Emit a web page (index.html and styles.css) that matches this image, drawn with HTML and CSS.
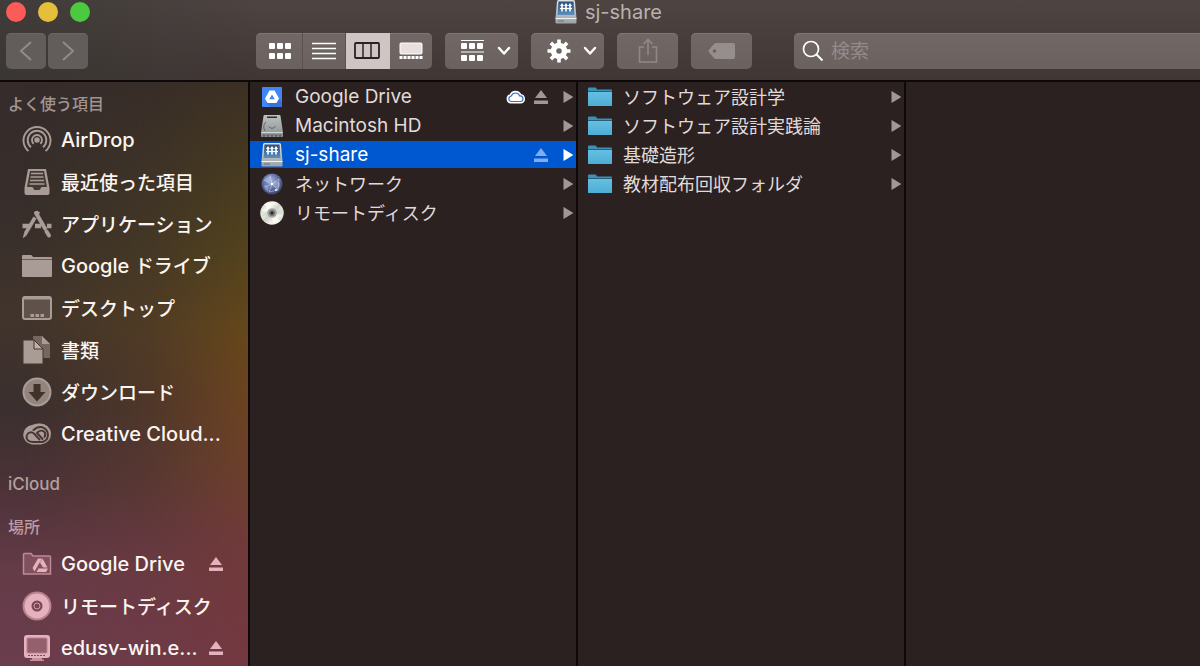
FILE: index.html
```html
<!DOCTYPE html>
<html lang="ja">
<head>
<meta charset="utf-8">
<meta name="viewport" content="width=device-width, initial-scale=1">
<title>sj-share</title>
<link rel="stylesheet" href="styles.css">
</head>
<body>
<svg class="defs" aria-hidden="true">
  <defs>
    <linearGradient id="silver" x1="0" y1="0" x2="0" y2="1"><stop offset="0" stop-color="#dfe3e4"/><stop offset="1" stop-color="#9aa3a7"/></linearGradient>
    <linearGradient id="hd" x1="0" y1="0" x2="0" y2="1"><stop offset="0" stop-color="#bcc0c0"/><stop offset="1" stop-color="#8b9191"/></linearGradient>
    <linearGradient id="screen" x1="0" y1="0" x2="0" y2="1"><stop offset="0" stop-color="#2b4f78"/><stop offset="1" stop-color="#5b8fc0"/></linearGradient>
    <linearGradient id="blue" x1="0" y1="0" x2="0" y2="1"><stop offset="0" stop-color="#66bfe2"/><stop offset="1" stop-color="#4dadd5"/></linearGradient>
    <radialGradient id="globe" cx=".45" cy=".35" r=".65"><stop offset="0" stop-color="#a7b5dc"/><stop offset=".6" stop-color="#5b6aa0"/><stop offset="1" stop-color="#3a4470"/></radialGradient>
    <linearGradient id="disc" x1="0" y1="0" x2="1" y2="1"><stop offset="0" stop-color="#b5b2a8"/><stop offset=".3" stop-color="#fbfaf2"/><stop offset=".5" stop-color="#d3d2ca"/><stop offset=".7" stop-color="#f4f3ee"/><stop offset="1" stop-color="#b5b8b2"/></linearGradient>
    <symbol id="i-server" viewBox="0 0 24 24">
      <path d="M3 1.500Q3 0 4.500 0h15Q21 0 21 1.500L22.500 18v4.500q0 1-1 1h-19q-1 0-1-1V18z" fill="url(#silver)"/>
      <path d="M4.500 1.500h15l1 13.500h-17z" fill="url(#screen)"/>
      <path d="M1.500 18.500h21" stroke="#eef1f2"/>
      <path d="M8 5v6.500M12 5v6.500M16 5v6.500" stroke="#fff" stroke-width="1.600"/>
      <path d="M6 6l2-3 2 3zM10 6l2-3 2 3zM14 6l2-3 2 3z" fill="#fff"/>
      <path d="M6 8.500h12" stroke="#fff" stroke-width="1.200"/>
      <path d="M4 21h6" stroke="#68737a"/>
    </symbol>
    <symbol id="i-hd" viewBox="0 0 24 24">
      <path d="M3.500 2q0-1 1-1h15q1 0 1 1L23 18.500V22q0 1-1 1H2q-1 0-1-1v-3.500z" fill="url(#hd)"/>
      <path d="M7 2.500h10v1.500H7z" fill="#292d2e"/>
      <path d="M1.500 18.500h21" stroke="#d2d6d6"/>
      <path d="M8.500 12.500q3.500 3.500 7 0M5 17Q2 12 6 8" fill="none" stroke="#5f6666"/>
      <path d="M2 21h20" stroke="#6d7373"/>
      <path d="M3 22h18" stroke="#3f4444" stroke-dasharray="2 2"/>
    </symbol>
    <symbol id="i-gdrive" viewBox="0 0 24 24">
      <rect x="2" y="2" width="20" height="20" rx="1" fill="#4285f4"/>
      <path d="M6 17.500L10.500 22h10Q22 22 22 20.500V17l-4-4z" fill="#3671d6"/>
      <path d="M9.500 5.500h5L19 13.500l-2.500 4.500h-9L5 13.500z" fill="#fff"/>
      <path d="M12 9.500l2.800 4.700H9.200z" fill="#4285f4"/>
    </symbol>
    <symbol id="i-globe" viewBox="0 0 24 24">
      <circle cx="12" cy="12" r="10.500" fill="url(#globe)"/>
      <path d="M4 8q3-4 7-4 1 3-2 6zM13 10q6-2 7 2 0 4-3 5-3-1-4-7zM4 13q4 0 5 3l-1 4q-4-2-4-7z" fill="#c5d0ea" opacity=".4"/>
      <path d="M4 8l8 4 7-5M12 12l-3 8M12 12l6 6M5 15l7-3-2-9M19 7l-1 11-9 2" fill="none" stroke="#d8e2f8" stroke-width=".6" opacity=".8"/>
      <circle cx="12" cy="12" r="1.200" fill="#fff"/><circle cx="16" cy="18" r="1" fill="#fff"/>
    </symbol>
    <symbol id="i-disc" viewBox="0 0 24 24">
      <circle cx="12" cy="12" r="11.700" fill="url(#disc)"/>
      <path d="M12 12L4 3.500Q7 1 10 1zM12 12l8 8q-3 3-7 3z" fill="#fffef0" opacity=".8"/>
      <path d="M12 12L23 8q1 3 .5 6zM12 12L1 10q0 4 1 6z" fill="#b7d0bd" opacity=".45"/>
      <circle cx="12" cy="12" r="4.800" fill="#a6a7a3"/><circle cx="12" cy="12" r="3" fill="#6e7070"/><circle cx="12" cy="12" r="1.300" fill="#1e1e1e"/>
    </symbol>
    <symbol id="i-folder" viewBox="0 0 24 20">
      <path d="M0 19V1.500Q0 .5 1 .5h6q1 0 1.500 1l.5 1h14q1 0 1 1V19z" fill="#3b92b8"/>
      <path d="M0 5h24v13q0 1-1 1H1q-1 0-1-1z" fill="url(#blue)"/>
      <path d="M0 4.500h24" stroke="#276078"/>
    </symbol>
    <symbol id="i-eject" viewBox="0 0 14 14"><path d="M7 0l6 8H1zM0 10.500h14V14H0z" fill="currentColor"/></symbol>
    <symbol id="i-arrow" viewBox="0 0 10 12"><path d="M.5.5Q.5 0 1 .3l8.600 5.200q.6.500 0 1L1 11.700q-.5.300-.5-.2z" fill="currentColor"/></symbol>
    <symbol id="i-cloud" viewBox="0 0 20 14"><path d="M5 12.500a3.700 3.700 0 0 1-.5-7.300A5.400 5.400 0 0 1 14.500 5a3.800 3.800 0 0 1 .5 7.500z" fill="#fff" stroke="#fff" stroke-width="2"/><path d="M5 11.500a2.800 2.800 0 0 1 .3-5.500A4.500 4.500 0 0 1 13.800 6a2.800 2.800 0 0 1 1 5.500z" fill="#fff" stroke="#3f74cc" stroke-width="1.200"/></symbol>
    <symbol id="i-chev" viewBox="0 0 14 10"><path d="M2 2l5 5.500L12 2" fill="none" stroke="#fff" stroke-width="2.400" stroke-linecap="round" stroke-linejoin="round"/></symbol>
  </defs>
</svg>

<div class="window">
  <header class="header">
    <div class="titlebar">
      <div class="lights">
        <button class="light close" aria-label="閉じる"></button>
        <button class="light minimize" aria-label="しまう"></button>
        <button class="light expand" aria-label="拡大"></button>
      </div>
      <h1 class="title"><svg class="file-icon"><use href="#i-server"/></svg>sj-share</h1>
    </div>
    <div class="toolbar">
      <div class="nav">
        <button class="btn back" aria-label="戻る"><svg width="14" height="20" viewBox="0 0 14 20"><path d="M12 1L2 10l10 9" fill="none" stroke="#918b89" stroke-width="2"/></svg></button>
        <button class="btn back" aria-label="進む"><svg width="14" height="20" viewBox="0 0 14 20"><path d="M2 1l10 9-10 9" fill="none" stroke="#918b89" stroke-width="2"/></svg></button>
      </div>
      <div class="segments">
        <button class="segment" aria-label="アイコン"><svg width="24" height="18" fill="#fff"><rect x="1" y="1" width="6" height="6" rx="1"/><rect x="9" y="1" width="6" height="6" rx="1"/><rect x="17" y="1" width="6" height="6" rx="1"/><rect x="1" y="11" width="6" height="6" rx="1"/><rect x="9" y="11" width="6" height="6" rx="1"/><rect x="17" y="11" width="6" height="6" rx="1"/></svg></button>
        <button class="segment" aria-label="リスト"><svg width="24" height="18"><path d="M0 1.500h24M0 6.500h24M0 11.500h24M0 16.500h24" stroke="#fff" stroke-width="1.600"/></svg></button>
        <button class="segment selected" aria-label="カラム"><svg width="26" height="18"><rect x="1" y="1" width="24" height="15" rx="1" fill="none" stroke="#292222" stroke-width="1.800"/><path d="M9 1v15M17 1v15" stroke="#292222" stroke-width="1.500"/></svg></button>
        <button class="segment" aria-label="ギャラリー"><svg width="24" height="18"><rect x="1" y="1" width="22" height="11" rx="1" fill="#e9dfdf" stroke="#fff"/><path d="M.5 15.500h23" stroke="#fff" stroke-width="3" stroke-dasharray="3 1"/></svg></button>
      </div>
      <button class="btn menu" aria-label="グループ"><svg width="24" height="24" fill="#fff"><path d="M0 1h23v1H0zM0 12.500h23v1H0z"/><rect x="0" y="4" width="6" height="6" rx="1"/><rect x="8" y="4" width="6" height="6" rx="1"/><rect x="16" y="4" width="6" height="6" rx="1"/><rect x="0" y="16" width="6" height="6" rx="1"/><rect x="8" y="16" width="6" height="6" rx="1"/><rect x="16" y="16" width="6" height="6" rx="1"/></svg><svg class="chev"><use href="#i-chev"/></svg></button>
      <button class="btn menu" aria-label="操作"><svg width="24" height="24" viewBox="-12 -12 24 24"><circle r="5.500" fill="none" stroke="#fff" stroke-width="5.500"/><g stroke="#fff" stroke-width="3.600"><path d="M0-11.500V-6M0 6v5.500M-11.500 0H-6M6 0h5.500"/><path d="M0-11.500V-6M0 6v5.500M-11.500 0H-6M6 0h5.500" transform="rotate(45)"/></g></svg><svg class="chev"><use href="#i-chev"/></svg></button>
      <button class="btn action" aria-label="共有"><svg width="20" height="26" fill="none" stroke="#918886" stroke-width="1.600"><path d="M6 9H1.500v15h17V9H14M10 17V2M5.500 6L10 1.500 14.500 6"/></svg></button>
      <button class="btn action" aria-label="タグ"><svg width="28" height="18"><path d="M8 1h17q2 0 2 2v12q0 2-2 2H8q-1 0-2-1L.8 10q-.6-1 0-2L6 2q1-1 2-1z" fill="#968e8c"/><circle cx="6.500" cy="9" r="1.800" fill="#6a6260"/></svg></button>
      <label class="search"><svg width="22" height="22"><circle cx="9" cy="9" r="7.500" fill="none" stroke="#fff" stroke-width="1.700"/><path d="M14.500 14.500l6 6" stroke="#fff" stroke-width="1.900"/></svg><input type="search" placeholder="検索" aria-label="検索"></label>
    </div>
  </header>

  <main class="content">
    <nav class="sidebar">
      <h2 class="heading first">よく使う項目</h2>
      <ul class="places">
        <li><a class="place latin" href="#"><svg class="glyph" viewBox="0 0 30 30" fill="none" stroke="currentColor" stroke-width="1.900"><circle cx="15" cy="15" r="1.800" fill="currentColor"/><path d="M11.700 18.800a5 5 0 1 1 6.600 0M9 22.200a9.300 9.300 0 1 1 12 0M6.500 26a13.500 13.500 0 1 1 17 0"/></svg><span class="name">AirDrop</span></a></li>
        <li><a class="place" href="#"><svg class="glyph" viewBox="0 0 30 30"><path d="M6 2h18l3.500 19v5q0 2-2 2h-21q-2 0-2-2v-5z" fill="currentColor"/><path d="M8 4h14l3 16h-5q-1 0-1.500 1.500T17 23h-4q-1 0-1.500-1.500T10 20H5z" fill="#443a36"/><path d="M9 6.500h12M8.500 10h13M8 13.500h14M7.500 17h15" stroke="currentColor" stroke-width="1.600"/></svg><span class="name">最近使った項目</span></a></li>
        <li><a class="place" href="#"><svg class="glyph" viewBox="0 0 30 30" fill="none" stroke="currentColor"><path d="M.5 17h8M13 17h6M25 17h4.500" stroke-width="4.500"/><path d="M14 4l9 15.500" stroke-width="4" stroke-linecap="round"/><path d="M24.500 22.500l2.500 4" stroke-width="4" stroke-linecap="round"/><path d="M16.500 2.500l-2 3.500M13 8.500L3.500 24.500" stroke-width="3.600"/><path d="M2.500 24l2.500 1.500L1.500 28.500z" fill="currentColor"/></svg><span class="name">アプリケーション</span></a></li>
        <li><a class="place latin" href="#"><svg class="glyph" viewBox="0 0 30 30"><path d="M0 7V5q0-1 1-1h8q1 0 2 2h18q1 0 1 1v1H0zM0 9h30v16q0 1-1 1H1q-1 0-1-1z" fill="currentColor"/><path d="M0 8.500h30" stroke="#6d5c52"/></svg><span class="name">Google <span class="jp">ドライブ</span></span></a></li>
        <li><a class="place" href="#"><svg class="glyph" viewBox="0 0 30 30"><rect x="1" y="4" width="28" height="22" rx="2" fill="#60524a" stroke="currentColor" stroke-width="2"/><path d="M2 5.500h26" stroke="currentColor" stroke-width="2"/><path d="M8.500 22.500h14" stroke="currentColor" stroke-width="3" stroke-dasharray="3.500 1.500"/></svg><span class="name">デスクトップ</span></a></li>
        <li><a class="place" href="#"><svg class="glyph" viewBox="0 0 30 30"><path d="M11 1h9l8 8v14H11z" fill="#75675f"/><path d="M20 1l8 8h-8z" fill="currentColor"/><path d="M1 5h11l9 9v15H1z" fill="currentColor" stroke="#453628"/><path d="M12 5l9 9h-9z" fill="#c0afa6" stroke="#453628"/></svg><span class="name">書類</span></a></li>
        <li><a class="place" href="#"><svg class="glyph" viewBox="0 0 30 30"><circle cx="15" cy="15" r="13.500" fill="#93857e" stroke="currentColor" stroke-width="2"/><path d="M11.500 7h7v8h5L15 24.500 6.500 15h5z" fill="#433229"/></svg><span class="name">ダウンロード</span></a></li>
        <li><a class="place latin" href="#"><svg class="glyph" viewBox="0 0 30 30"><path d="M10 6Q13.500 4 18 4.500a10.500 10.500 0 0 1 1 21H10A9.800 9.800 0 0 1 10 6z" fill="currentColor"/><g fill="none" stroke="#493534" stroke-width="1.900" stroke-linecap="round"><path d="M17.500 20.500l-5.500-6q-3-2.500-6 0-3 3.500 0 7 2 1.500 5 1.500h9q6-1 6-7.500-.5-6-6.500-7.500-4.500-.5-8 3"/><path d="M22.500 18q2-3-.5-5.500-3-2-6 .5l-1 1M15 14l5.500 6"/></g></svg><span class="name">Creative Cloud...</span></a></li>
      </ul>
      <h2 class="heading cloud">iCloud</h2>
      <h2 class="heading devices">場所</h2>
      <ul class="places lower">
        <li><a class="place latin" href="#"><svg class="glyph" viewBox="0 0 30 30"><path d="M1.500 25V5.500q0-1 1-1H9l2 2.500h16.500q1 0 1 1V25z" fill="#80515d" stroke="#bd8a97" stroke-width="1.500"/><path d="M16 9.500h4l-5.500 9.500-2 3.500-2-3.500zM20.500 9.500l5 9H21l-3-5zM16.500 19.500h9.500l-2 3.500h-9.500z" fill="currentColor"/></svg><span class="name">Google Drive</span><svg class="eject"><use href="#i-eject"/></svg></a></li>
        <li><a class="place" href="#"><svg class="glyph" viewBox="0 0 30 30"><circle cx="15" cy="15" r="13.500" fill="currentColor" stroke="#b98091" stroke-width="2"/><circle cx="15" cy="15" r="5.500" fill="#7a4656"/><circle cx="15" cy="15" r="3" fill="none" stroke="#d29aa9"/></svg><span class="name">リモートディスク</span></a></li>
        <li><a class="place latin" href="#"><svg class="glyph" viewBox="0 0 30 30"><rect x="2" y="2" width="26" height="23" rx="3" fill="currentColor"/><rect x="5" y="5" width="20" height="15" rx="1" fill="#94606e" stroke="#b98091"/><path d="M6 22.500h18" stroke="#804b58" stroke-dasharray="2 1"/><path d="M10 25h10v1.500h2V28H8v-1.500h2z" fill="#c58f9d"/></svg><span class="name">edusv-win.e...</span><svg class="eject"><use href="#i-eject"/></svg></a></li>
      </ul>
    </nav>

    <ul class="column">
      <li><a class="row latin" href="#"><svg class="file-icon"><use href="#i-gdrive"/></svg><span class="name">Google Drive</span><svg class="cloud-badge"><use href="#i-cloud"/></svg><svg class="eject"><use href="#i-eject"/></svg><svg class="arrow"><use href="#i-arrow"/></svg></a></li>
      <li><a class="row latin" href="#"><svg class="file-icon"><use href="#i-hd"/></svg><span class="name">Macintosh HD</span><svg class="arrow"><use href="#i-arrow"/></svg></a></li>
      <li><a class="row latin active" href="#" aria-current="true"><svg class="file-icon"><use href="#i-server"/></svg><span class="name">sj-share</span><svg class="eject"><use href="#i-eject"/></svg><svg class="arrow"><use href="#i-arrow"/></svg></a></li>
      <li><a class="row" href="#"><svg class="file-icon"><use href="#i-globe"/></svg><span class="name">ネットワーク</span><svg class="arrow"><use href="#i-arrow"/></svg></a></li>
      <li><a class="row" href="#"><svg class="file-icon"><use href="#i-disc"/></svg><span class="name">リモートディスク</span><svg class="arrow"><use href="#i-arrow"/></svg></a></li>
    </ul>
    <ul class="column">
      <li><a class="row" href="#"><svg class="folder"><use href="#i-folder"/></svg><span class="name">ソフトウェア設計学</span><svg class="arrow"><use href="#i-arrow"/></svg></a></li>
      <li><a class="row" href="#"><svg class="folder"><use href="#i-folder"/></svg><span class="name">ソフトウェア設計実践論</span><svg class="arrow"><use href="#i-arrow"/></svg></a></li>
      <li><a class="row" href="#"><svg class="folder"><use href="#i-folder"/></svg><span class="name">基礎造形</span><svg class="arrow"><use href="#i-arrow"/></svg></a></li>
      <li><a class="row" href="#"><svg class="folder"><use href="#i-folder"/></svg><span class="name">教材配布回収フォルダ</span><svg class="arrow"><use href="#i-arrow"/></svg></a></li>
    </ul>
  </main>
</div>
</body>
</html>
```
FILE: styles.css
```css
* { box-sizing: border-box; }

body {
  margin: 0;
  background: #2b2120;
  color: #dfdad9;
  font-family: Inter, "Noto Sans CJK JP", sans-serif;
}

.defs { position: absolute; width: 0; height: 0; }
svg { display: block; flex: none; }
ul { margin: 0; padding: 0; list-style: none; }
a { color: inherit; text-decoration: none; }
button { border: 0; padding: 0; font: inherit; color: inherit; }

.window {
  display: flex;
  flex-direction: column;
  height: 100vh;
  overflow: hidden;
}

/* Title bar and toolbar */
.header {
  flex: none;
  padding-bottom: 11px;
  border-bottom: 2px solid #0d0908;
  background:
    linear-gradient(to right, rgba(54, 54, 50, 0.6), rgba(54, 54, 50, 0.3) 12%, rgba(54, 54, 50, 0) 22%),
    linear-gradient(#4e4442, #403634);
}

.titlebar {
  display: grid;
  grid-template-columns: 1fr auto 1fr;
  align-items: center;
  height: 23px;
  padding-left: 6px;
}

.lights { display: flex; gap: 12px; }
.light { width: 20px; height: 20px; border-radius: 50%; }
.close { background: #fc5b57; }
.minimize { background: #e5bf3c; }
.expand { background: #4bc93f; }

.title {
  display: flex;
  align-items: center;
  gap: 7px;
  margin: 0 0 0 10px;
  color: #b9b1af;
  font-size: 20px;
  font-weight: 400;
  line-height: 24px;
}

.toolbar {
  display: flex;
  gap: 13px;
  padding: 10px 0 0 6px;
}

.nav { display: flex; gap: 2px; width: 237px; }

.btn,
.segments,
.search {
  height: 36px;
  border-radius: 5px;
  background: linear-gradient(#716765, #6b6260);
  box-shadow: inset 0 1px #807673;
}

.btn { display: flex; align-items: center; justify-content: center; }
.back { width: 40px; background: #625d5b; box-shadow: inset 0 1px #6c6664; }
.menu { width: 73px; gap: 12px; padding-left: 8px; }
.action { width: 61px; }
.chev { width: 14px; height: 10px; }

.segments { display: flex; width: 176px; overflow: hidden; }
.segment {
  display: flex;
  flex: 1;
  align-items: center;
  justify-content: center;
  border-right: 1px solid #5b5250;
  background: transparent;
}
.segment:first-child { padding-left: 3px; }
.segment:last-child { border-right: 0; }
.segment.selected { background: #cfc5c4; border-color: #cfc5c4; }

.search {
  display: flex;
  flex: 1;
  align-items: center;
  gap: 7px;
  margin-left: 29px;
  padding-left: 8px;
  border-radius: 5px 0 0 5px;
}
.search input {
  flex: 1;
  min-width: 0;
  border: 0;
  padding: 0;
  background: transparent;
  color: #fff;
  font: inherit;
  font-size: 19px;
  outline: 0;
}
.search input::placeholder { color: #948b89; opacity: 1; }

.content { display: flex; flex: 1; min-height: 0; }

/* Sidebar */
.sidebar {
  position: relative;
  isolation: isolate;
  flex: none;
  width: 250px;
  border-right: 2px solid #0d0908;
  background: linear-gradient(#352c2b, #382f2b 24%, #41342b 40%, #3b2f2f 56%, #4a3237 68%, #653b48 84%, #6b3d4d);
}
.sidebar::before {
  content: "";
  position: absolute;
  z-index: -1;
  inset: 0;
  background: linear-gradient(#3c3024, #4a3c1f 18%, #54431c 30%, #66471b 43%, #6c4320 54%, #6d402a 66%, #703a38 77%, #743841);
  -webkit-mask-image: linear-gradient(to right, transparent 10%, rgba(0, 0, 0, 0.4) 60%, #000);
  mask-image: linear-gradient(to right, transparent 10%, rgba(0, 0, 0, 0.4) 60%, #000);
}

.heading {
  margin: 0;
  padding-left: 8px;
  color: #a09593;
  font-size: 16px;
  font-weight: 500;
  line-height: 24px;
}
.heading.first { padding-top: 10px; margin-bottom: 3px; }
.heading.cloud { margin-top: 17px; color: #b3a0a1; font-size: 17px; }
.heading.devices { margin: 19px 0 4px; color: #bd9ba2; }

.place {
  display: flex;
  align-items: center;
  gap: 9px;
  height: 42px;
  padding: 0 25px 0 22px;
  color: #a99b95;
  font-family: "Noto Sans CJK JP", sans-serif;
  font-size: 19px;
  font-weight: 500;
  line-height: 26px;
  white-space: nowrap;
}
.place.latin { font-family: Inter, "Noto Sans CJK JP", sans-serif; font-size: 20px; }
.jp { font-size: 19px; }
.place .name { color: #fbf5f1; }
.lower .place { color: #e5b1bd; }
.glyph { width: 30px; height: 30px; }
.name { flex: 1; min-width: 0; }
.eject { width: 14px; height: 14px; }

/* Column browser */
.column {
  display: flex;
  flex: 0 0 328px;
  flex-direction: column;
  gap: 2px;
  min-width: 0;
  padding-top: 1px;
  border-right: 2px solid #0d0908;
}
.row {
  display: flex;
  align-items: center;
  height: 27px;
  padding: 0 3px 0 10px;
  color: #9f9896;
  font-family: "Noto Sans CJK JP", sans-serif;
  font-size: 18px;
  line-height: 25px;
  white-space: nowrap;
}
.row.latin { font-family: Inter, sans-serif; font-size: 19px; }
.row .name { padding-left: 11px; color: #e0dbda; }
.row.active { background: #0058d0; color: #fff; }
.row.active .name { color: #fff; }
.row.active .eject { color: #80acf0; }
.file-icon, .folder { width: 24px; height: 24px; }
.folder { height: 20px; }
.arrow { width: 10px; height: 12px; margin-left: 15px; }
.cloud-badge { width: 20px; height: 14px; margin-right: 8px; }
```
